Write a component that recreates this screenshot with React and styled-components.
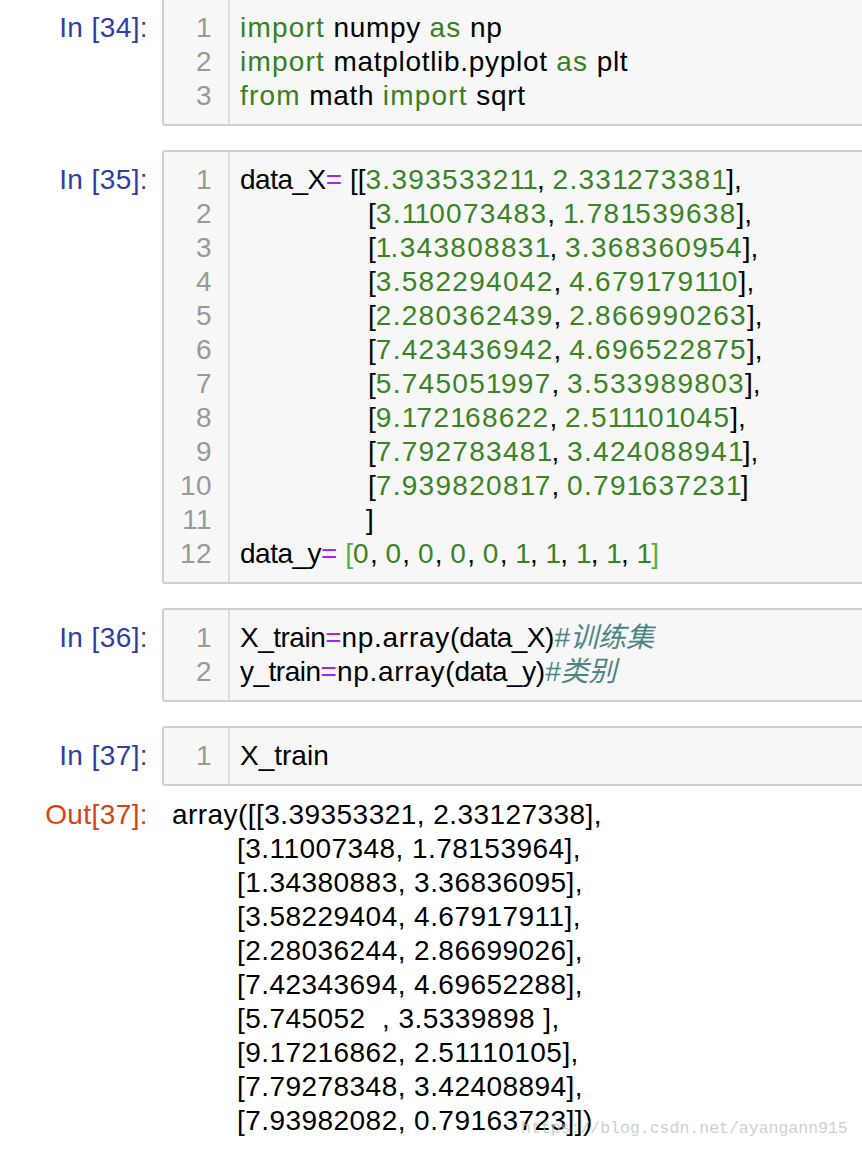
import React from "react";
import styled, { createGlobalStyle } from "styled-components";

const Global = createGlobalStyle`
  html, body { margin: 0; padding: 0; background: #fff; overflow: hidden; }
  body { font-family: "Liberation Sans", Arial, "Noto Sans CJK SC", sans-serif; }
`;

const Notebook = styled.div`
  display: flex;
  flex-direction: column;
  gap: 24px;
  margin-top: -2px;
  position: relative;
  width: 862px;
  height: 1154px;
`;

const Row = styled.div`
  display: flex;
  align-items: flex-start;
`;

const Prompt = styled.div`
  flex: 0 0 162px;
  box-sizing: border-box;
  text-align: right;
  padding-right: 14px;
  padding-top: ${(p) => p.$top}px;
  font-size: 28px;
  line-height: 34px;
  letter-spacing: 0.4px;
  color: ${(p) => (p.$out ? "#d84315" : "#303f9f")};
  white-space: pre;
`;

const Cell = styled.div`
  flex: 1;
  display: flex;
  margin-right: -30px;
  background: #f7f7f7;
  border: 2px solid #d0d0d0;
  border-radius: 3px;
`;

const Gutter = styled.div`
  flex: 0 0 66px;
  box-sizing: border-box;
  padding: 11px 16px 11px 0;
  border-right: 2px solid #dedede;
  text-align: right;
  color: #999;
  font-size: 28px;
  line-height: 34px;
  letter-spacing: 0.4px;
`;

const Code = styled.div`
  flex: 1;
  padding: 11px 0 11px 10px;
  font-size: 28px;
  line-height: 34px;
  color: #000;
`;

const Line = styled.div`
  white-space: pre;
  padding-left: ${(p) => p.$indent || 0}px;
  height: 34px;
`;

const colors = {
  kw: "#38801f",
  num: "#3b8426",
  op: "#a626ee",
  cm: "#4b8585",
  br: "#4cb33c",
  plain: "#000",
  id: "#000",
  p: "#000",
};

const spacing = {
  kw: "1.2px",
  num: "1.3px",
  op: "0px",
  cm: "0px",
  br: "0px",
  plain: "0.7px",
  id: "-0.5px",
  p: "0px",
};

const Tok = styled.span`
  color: ${(p) => colors[p.$t]};
  letter-spacing: ${(p) => spacing[p.$t]};
  font-style: ${(p) => (p.$t === "cm" ? "italic" : "normal")};
`;

const One = styled.span`
  letter-spacing: -0.8px;
`;

const Output = styled.div`
  flex: 1;
  padding: 0 0 0 10px;
  font-size: 28px;
  line-height: 34px;
  letter-spacing: 0.45px;
  color: #000;
`;

const OutRow = styled(Row)`
  margin-top: -12px;
`;

const Watermark = styled.div`
  position: absolute;
  left: 521px;
  top: 1121px;
  font-family: "Liberation Mono", "Courier New", monospace;
  font-size: 16.5px;
  line-height: 20px;
  color: rgba(190, 190, 190, 0.75);
  white-space: pre;
`;

const renderTok = ([t, s], j) => {
  if (t !== "num") {
    return (
      <Tok key={j} $t={t}>
        {s}
      </Tok>
    );
  }
  return (
    <Tok key={j} $t={t}>
      {s
        .split(/(1+)/)
        .filter(Boolean)
        .map((part, k) => (part[0] === "1" ? <One key={k}>{part}</One> : part))}
    </Tok>
  );
};

const renderLine = (line, i) => (
  <Line key={i} $indent={line.indent}>
    {line.toks.map(renderTok)}
  </Line>
);

const pair = (a, b, end) => [
  ["p", "["],
  ["num", a],
  ["p", ", "],
  ["num", b],
  ["p", end],
];

const dataX = [
  ["3.393533211", "2.331273381"],
  ["3.110073483", "1.781539638"],
  ["1.343808831", "3.368360954"],
  ["3.582294042", "4.679179110"],
  ["2.280362439", "2.866990263"],
  ["7.423436942", "4.696522875"],
  ["5.745051997", "3.533989803"],
  ["9.172168622", "2.511101045"],
  ["7.792783481", "3.424088941"],
  ["7.939820817", "0.791637231"],
];

const ys = [0, 0, 0, 0, 0, 1, 1, 1, 1, 1];

const cells = [
  {
    n: 34,
    lines: [
      { toks: [["kw", "import"], ["plain", " numpy "], ["kw", "as"], ["plain", " np"]] },
      { toks: [["kw", "import"], ["plain", " matplotlib.pyplot "], ["kw", "as"], ["plain", " plt"]] },
      { toks: [["kw", "from"], ["plain", " math "], ["kw", "import"], ["plain", " sqrt"]] },
    ],
  },
  {
    n: 35,
    lines: [
      {
        toks: [["id", "data_X"], ["op", "="], ["p", " ["], ...pair(dataX[0][0], dataX[0][1], "],")],
      },
      ...dataX.slice(1).map((d, i) => ({
        indent: 128,
        toks: pair(d[0], d[1], i === 8 ? "]" : "],"),
      })),
      { indent: 126, toks: [["p", "]"]] },
      {
        toks: [
          ["id", "data_y"],
          ["op", "="],
          ["p", " "],
          ["br", "["],
          ...ys.flatMap((v, i) =>
            i === 0 ? [["num", String(v)]] : [["p", ", "], ["num", String(v)]]
          ),
          ["br", "]"],
        ],
      },
    ],
  },
  {
    n: 36,
    lines: [
      {
        toks: [
          ["id", "X_train"],
          ["op", "="],
          ["plain", "np.array"],
          ["p", "("],
          ["id", "data_X"],
          ["p", ")"],
          ["cm", "#训练集"],
        ],
      },
      {
        toks: [
          ["id", "y_train"],
          ["op", "="],
          ["plain", "np.array"],
          ["p", "("],
          ["id", "data_y"],
          ["p", ")"],
          ["cm", "#类别"],
        ],
      },
    ],
  },
  {
    n: 37,
    lines: [{ toks: [["p", "X_train"]] }],
  },
];

const outRows = [
  "array([[3.39353321, 2.33127338],",
  "[3.11007348, 1.78153964],",
  "[1.34380883, 3.36836095],",
  "[3.58229404, 4.67917911],",
  "[2.28036244, 2.86699026],",
  "[7.42343694, 4.69652288],",
  "[5.745052  , 3.5339898 ],",
  "[9.17216862, 2.51110105],",
  "[7.79278348, 3.42408894],",
  "[7.93982082, 0.79163723]])",
];

export default function App() {
  return (
    <>
      <Global />
      <Notebook>
        {cells.map((c) => (
          <Row key={c.n}>
            <Prompt $top={13}>{`In [${c.n}]:`}</Prompt>
            <Cell>
              <Gutter>
                {c.lines.map((_, i) => (
                  <div key={i}>{i + 1}</div>
                ))}
              </Gutter>
              <Code>{c.lines.map(renderLine)}</Code>
            </Cell>
          </Row>
        ))}
        <OutRow>
          <Prompt $out $top={0}>{"Out[37]:"}</Prompt>
          <Output>
            {outRows.map((r, i) => (
              <Line key={i} $indent={i === 0 ? 0 : 65}>
                {r}
              </Line>
            ))}
          </Output>
        </OutRow>
        <Watermark>https://blog.csdn.net/ayangann915</Watermark>
      </Notebook>
    </>
  );
}
